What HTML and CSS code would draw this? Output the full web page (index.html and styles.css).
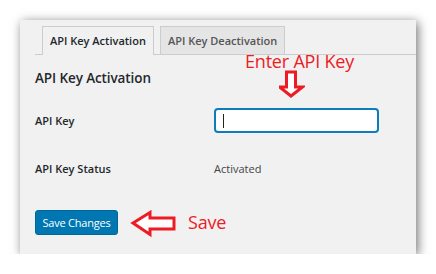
FILE: index.html
```html
<!DOCTYPE html>
<html>
<head>
<meta charset="utf-8">
<link rel="stylesheet" href="styles.css">
</head>
<body>
<div class="panel">
  <div class="tabs">
    <div class="tab active">API Key Activation</div>
    <div class="tab">API Key Deactivation</div>
  </div>
  <h2 class="title">API Key Activation</h2>
  <div class="form">
    <div class="label">API Key</div>
    <div class="field"><div class="input"><span class="caret"></span></div></div>
    <div class="label status-label">API Key Status</div>
    <div class="value status-value">Activated</div>
  </div>
  <div class="actions">
    <button class="btn">Save Changes</button>
    <svg class="left-arrow" width="48" height="28" viewBox="0 0 48 28">
      <polygon points="3,13 20,2.5 20,8 44,8 44,19 20,19 20,24.5" fill="#fff" stroke="#ed1c24" stroke-width="3" stroke-linejoin="miter"/>
    </svg>
    <span class="note save-note">Save</span>
  </div>
  <div class="enter-note note">Enter API Key</div>
  <svg class="down-arrow" width="26" height="28" viewBox="0 0 26 28">
    <polygon points="7.5,2 16.5,2 16.5,17 23.5,17 12,26 0.5,17 7.5,17" fill="#fff" stroke="#ed1c24" stroke-width="3" stroke-linejoin="miter"/>
  </svg>
</div>
</body>
</html>
```
FILE: styles.css
```css
html, body {
  margin: 0;
  padding: 0;
  background: #fff;
}
body {
  padding: 20px 0 0 20px;
  font-family: "Open Sans", "Noto Sans", sans-serif;
}
.panel {
  position: relative;
  width: 396px;
  height: 234px;
  background: #f1f1f1;
  box-shadow: 2px 2px 10px rgba(0,0,0,0.55);
  padding-left: 15px;
  box-sizing: border-box;
}
.tabs {
  display: flex;
  gap: 6px;
  padding: 6px 0 0 7px;
  border-bottom: 1px solid #ccc;
  height: 28px;
  box-sizing: content-box;
}
.tab {
  height: 28px;
  box-sizing: border-box;
  border: 1px solid #ccc;
  border-bottom: none;
  background: #e5e5e5;
  color: #555;
  font-size: 11px;
  font-weight: 600;
  line-height: 27px;
  padding: 0 7px;
}
.tab.active {
  background: #f1f1f1;
  color: #23282d;
  height: 29px;
  margin-bottom: -1px;
}
.title {
  margin: 13px 0 0 0;
  font-size: 13.5px;
  font-weight: 600;
  color: #23282d;
  line-height: 20px;
  letter-spacing: -0.1px;
}
.form {
  display: grid;
  grid-template-columns: 179px 165px;
  grid-template-rows: 25px 25px;
  row-gap: 22.5px;
  margin-top: 20px;
  align-items: center;
}
.label {
  font-size: 11px;
  font-weight: 600;
  color: #23282d;
}
.value {
  font-size: 11px;
  color: #444;
}
.input {
  width: 165px;
  height: 25px;
  box-sizing: border-box;
  background: #fff;
  border: 2px solid #0b7dba;
  border-radius: 4px;
  display: flex;
  align-items: center;
  padding-left: 7px;
}
.caret {
  width: 1px;
  height: 14px;
  background: #222;
}
.actions {
  display: flex;
  align-items: center;
  margin-top: 26.5px;
}
.btn {
  width: 83px;
  height: 25px;
  background: #0077b3;
  border: 1px solid #006799;
  border-radius: 3px;
  color: #fff;
  font-family: "Open Sans", "Noto Sans", sans-serif;
  font-size: 11px;
  letter-spacing: -0.2px;
  padding: 0;
}
.left-arrow {
  margin-left: 12px;
  margin-top: 3px;
}
.note {
  color: #ed1c24;
  font-family: "Open Sans", "Noto Sans", sans-serif;
  font-size: 18px;
  letter-spacing: -0.2px;
}
.save-note {
  margin-left: 10px;
  margin-top: -1px;
}
.enter-note {
  position: absolute;
  left: 225px;
  top: 31px;
  line-height: 20px;
}
.down-arrow {
  position: absolute;
  left: 259px;
  top: 50px;
}
```
